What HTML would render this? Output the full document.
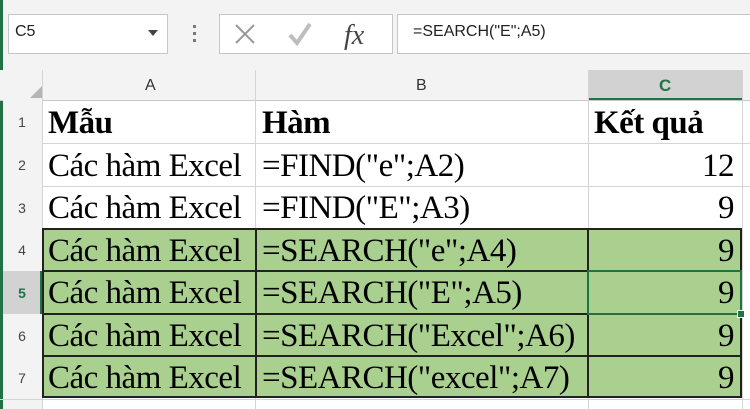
<!DOCTYPE html><html><head><style>
body{margin:0;width:750px;height:409px;overflow:hidden;background:#fff;font-family:"Liberation Sans",sans-serif;position:relative}
.a{position:absolute}
.t{position:absolute;font-family:"Liberation Serif",serif;font-size:33px;color:#000;white-space:nowrap;line-height:42px;letter-spacing:-0.5px}
.rh{position:absolute;left:3px;width:38px;text-align:center;font-size:14px;color:#444;line-height:42px}
</style></head><body>
<div class="a" style="left:0;top:0;width:750px;height:70px;background:#f3f3f3"></div>
<div class="a" style="left:0;top:0;width:3px;height:409px;background:#217346"></div>
<div class="a" style="left:8px;top:14px;width:158px;height:38px;background:#fff;border:1px solid #c6c6c6"></div>
<div class="a" style="left:15px;top:23px;font-size:16px;color:#222">C5</div>
<div class="a" style="left:148px;top:30px;width:0;height:0;border-left:5px solid transparent;border-right:5px solid transparent;border-top:6px solid #444"></div>
<div class="a" style="left:193px;top:25px;width:3px;height:3px;background:#777;box-shadow:0 7px #777,0 14px #777"></div>
<div class="a" style="left:219px;top:14px;width:172px;height:38px;background:#fff;border:1px solid #c6c6c6"></div>
<svg class="a" style="left:232px;top:20px" width="150" height="30"><path d="M4 5L22 23M22 5L4 23" stroke="#9a9a9a" stroke-width="2" fill="none"/><path d="M58 15l7 8L78 4" stroke="#bdbdbd" stroke-width="4" fill="none"/><text x="112" y="24" font-family="Liberation Serif" font-style="italic" font-size="28" fill="#444">fx</text></svg>
<div class="a" style="left:397px;top:14px;width:353px;height:38px;background:#fff;border:1px solid #c6c6c6"></div>
<div class="a" style="left:413px;top:23px;font-size:16px;color:#222">=SEARCH("E";A5)</div>
<div class="a" style="left:0;top:70px;width:750px;height:30px;background:#f3f3f3;border-bottom:1px solid #c8c8c8"></div>
<div class="a" style="left:588px;top:70px;width:154px;height:28px;background:#d2d2d2;border-bottom:2px solid #217346"></div>
<div class="a" style="left:30px;top:86px;width:0;height:0;border-left:12px solid transparent;border-bottom:12px solid #b5b5b5"></div>
<div class="a" style="left:42px;top:70px;width:1px;height:339px;background:#d4d4d4"></div>
<div class="a" style="left:145px;top:77px;font-size:16px;color:#333">A</div>
<div class="a" style="left:416px;top:77px;font-size:16px;color:#333">B</div>
<div class="a" style="left:659px;top:76px;font-size:17px;font-weight:bold;color:#217346">C</div>
<div class="a" style="left:255px;top:70px;width:1px;height:339px;background:#d4d4d4"></div>
<div class="a" style="left:588px;top:70px;width:1px;height:339px;background:#d4d4d4"></div>
<div class="a" style="left:742px;top:70px;width:1px;height:339px;background:#d4d4d4"></div>
<div class="a" style="left:3px;top:100px;width:39px;height:309px;background:#f3f3f3"></div>
<div class="a" style="left:3px;top:271px;width:39px;height:43px;background:#d2d2d2;border-right:2px solid #217346;box-sizing:border-box"></div>
<div class="a" style="left:42px;top:143px;width:708px;height:1px;background:#d4d4d4"></div>
<div class="a" style="left:42px;top:186px;width:708px;height:1px;background:#d4d4d4"></div>
<div class="a" style="left:0;top:399px;width:750px;height:1px;background:#d4d4d4"></div>
<div class="a" style="left:42px;top:228px;width:700px;height:170px;background:#a9d08e;border:2px solid #222;box-sizing:border-box"></div>
<div class="a" style="left:42px;top:270px;width:700px;height:2px;background:#222"></div>
<div class="a" style="left:42px;top:313px;width:700px;height:2px;background:#222"></div>
<div class="a" style="left:42px;top:355px;width:700px;height:2px;background:#222"></div>
<div class="a" style="left:255px;top:228px;width:2px;height:170px;background:#222"></div>
<div class="a" style="left:587px;top:228px;width:2px;height:170px;background:#222"></div>
<div class="a" style="left:587px;top:270px;width:155px;height:45px;border:2px solid #217346;box-sizing:border-box"></div>
<div class="a" style="left:737px;top:310px;width:6px;height:6px;background:#217346;border:1px solid #fff"></div>
<div class="rh" style="top:101px">1</div><div class="rh" style="top:144px">2</div><div class="rh" style="top:187px">3</div><div class="rh" style="top:229px">4</div><div class="rh" style="top:272px;color:#217346;font-weight:bold">5</div><div class="rh" style="top:315px">6</div><div class="rh" style="top:357px">7</div>
<div class="t" style="left:48px;top:102px;font-weight:bold">Mẫu</div>
<div class="t" style="left:262px;top:102px;font-weight:bold">Hàm</div>
<div class="t" style="left:594px;top:102px;font-weight:bold">Kết quả</div>
<div class="t" style="left:48px;top:145px">Các hàm Excel</div><div class="t" style="left:262px;top:145px">=FIND("e";A2)</div><div class="t" style="right:16px;top:145px">12</div>
<div class="t" style="left:48px;top:187px">Các hàm Excel</div><div class="t" style="left:262px;top:187px">=FIND("E";A3)</div><div class="t" style="right:16px;top:187px">9</div>
<div class="t" style="left:48px;top:230px">Các hàm Excel</div><div class="t" style="left:262px;top:230px">=SEARCH("e";A4)</div><div class="t" style="right:16px;top:230px">9</div>
<div class="t" style="left:48px;top:272px">Các hàm Excel</div><div class="t" style="left:262px;top:272px">=SEARCH("E";A5)</div><div class="t" style="right:16px;top:272px">9</div>
<div class="t" style="left:48px;top:315px">Các hàm Excel</div><div class="t" style="left:262px;top:315px">=SEARCH("Excel";A6)</div><div class="t" style="right:16px;top:315px">9</div>
<div class="t" style="left:48px;top:357px">Các hàm Excel</div><div class="t" style="left:262px;top:357px">=SEARCH("excel";A7)</div><div class="t" style="right:16px;top:357px">9</div>
</body></html>
